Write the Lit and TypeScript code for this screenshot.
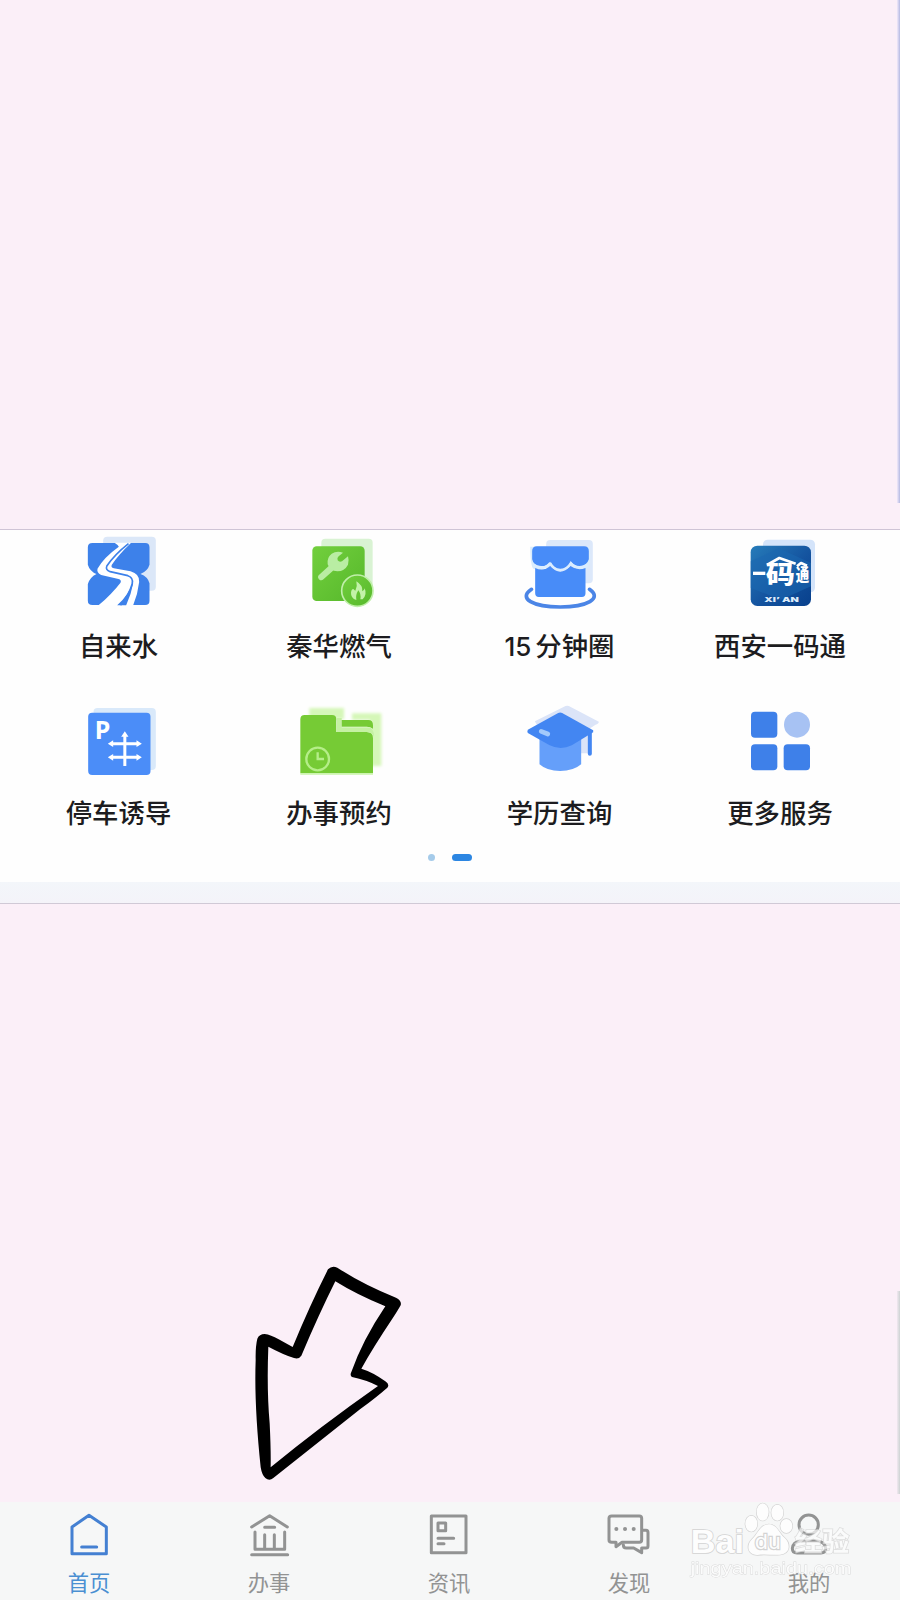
import { LitElement, html, svg, css } from "lit";
import { customElement } from "lit/decorators.js";

const ICONS = [
  {
    label: html`自来水`,
    box: "57.5 30 300 255",
    art: svg`
      <rect x="160" y="50" width="158" height="162" rx="12" fill="#dbe7f8"/>
      <path d="M128 69H286Q299 69 299 82V134Q294 152 272 162Q294 170 299 190V242Q299 255 286 255H128Q114 255 114 242V192Q120 172 140 162Q120 154 114 134V82Q114 69 128 69Z" fill="#3d81ea"/>
      <path d="M194 68H244Q206 104 186 134Q182 142 192 145L242 154Q270 162 268 186Q264 222 250 256H146Q186 222 212 188Q216 180 206 177L154 165Q140 158 143 146Q162 112 207 80Q204 74 194 68Z" fill="#fff"/>
      <path d="M236 71Q194 104 171 138Q166 150 181 155L234 167Q252 173 247 192Q238 224 212 256" fill="none" stroke="#3d81ea" stroke-width="5"/>
      <path d="M247 190Q238 224 202 256H229Q244 224 250 190Z" fill="#3d81ea"/>`,
  },
  {
    label: html`秦华燃气`,
    box: "57 30 300 255",
    art: svg`
      <rect x="154" y="56" width="154" height="164" rx="12" fill="#d9f3d3"/>
      <rect x="127" y="79" width="157" height="164" rx="13" fill="url(#leaf)"/>
      <path d="M154 171L186 142" stroke="#b9eda3" stroke-width="19" stroke-linecap="round"/>
      <path d="M219 98Q200 92 185 101Q170 113 173 133Q180 153 202 154Q224 153 234 134Q238 122 234 109L216 124Q208 128 203 121Q200 114 206 109Z" fill="#b9eda3"/>
      <circle cx="262" cy="212" r="47" fill="url(#leaf)" stroke="#c0efaa" stroke-width="5"/>
      <path d="M259 184Q279 196 277 214Q284 210 284 205Q292 224 278 238H271Q274 222 265 211Q256 225 259 240Q242 234 243 218Q244 207 250 207Q253 211 256 212Q263 198 259 184Z" fill="#c3f2a8"/>`,
  },
  {
    label: html`<span class="digits">15</span>分钟圈`,
    box: "59.5 30 300 255",
    art: svg`
      <rect x="168" y="60" width="140" height="130" rx="12" fill="#dce8fa"/>
      <path d="M120 80Q121 140 130 146Q154 156 180 134Q210 166 241 134Q266 154 290 146Q302 136 300 100V80Z" fill="#d9ecfc"/>
      <path d="M135 144Q160 156 180 138Q210 172 241 138Q262 154 286 144V220Q286 231 275 231H146Q135 231 135 220Z" fill="#488cf8"/>
      <path d="M140 79H282Q296 79 296 93V118Q290 138 268 138Q252 137 242 125Q230 147 210 147Q190 146 180 125Q170 140 153 138Q130 138 126 118V93Q126 79 140 79Z" fill="#488cf8"/>
      <path d="M180 129Q192 150 210 150Q230 150 242 129Q254 144 270 142Q284 142 292 134M180 129Q168 144 152 142Q138 142 130 134" fill="none" stroke="#dbedff" stroke-width="7"/>
      <path d="M124 208C82 236 130 261 210 261S338 236 298 208" fill="none" stroke="#4b85e6" stroke-width="11" stroke-linecap="round"/>`,
  },
  {
    label: html`西安一码通`,
    box: "91 31 300 255",
    art: svg`
      <rect x="190" y="60" width="156" height="158" rx="14" fill="#d4e4fa"/>
      <rect x="153" y="78" width="181" height="181" rx="20" fill="url(#night)"/>
      <path d="M153 125L238 86L334 130V200L244 240L153 205Z" fill="#1b67b0" opacity=".55"/>
      <path d="M160 161H197" stroke="#fff" stroke-width="10"/>
      <path d="M202 136L239 115L288 132M292 140L304 130L322 138" fill="none" stroke="#fff" stroke-width="8" stroke-linejoin="round"/>
      <text class="code" transform="translate(198 190) scale(1.22 1)">码</text>
      <text class="code" transform="translate(288 185) scale(.56 .72)">通</text>
      <text class="xian" x="194" y="247" textLength="104" lengthAdjust="spacingAndGlyphs">XI’ AN</text>`,
  },
  {
    label: html`停车诱导`,
    box: "57.5 30 300 255",
    art: svg`
      <rect x="131" y="54" width="187" height="186" rx="12" fill="#d9e9fa"/>
      <rect x="115" y="68" width="187" height="187" rx="12" fill="#4b8df8"/>
      <text class="parking" x="135" y="147">P</text>
      <path d="M225 228V136M184 161H266M184 202H266" fill="none" stroke="#fff" stroke-width="9"/>
      <path d="M225 124L236 140H214ZM174 161L190 151V171ZM276 161L260 151V171ZM174 202L190 192V212ZM276 202L260 192V212Z" fill="#fff"/>`,
  },
  {
    label: html`办事预约`,
    box: "717 30 300 255",
    art: svg`
      <g filter="url(#soft)">
        <path d="M778 54H882V88H778ZM906 70H994V228H960V90H906Z" fill="#d5f7b8"/>
      </g>
      <path d="M764 75H846Q859 75 859 88V126H950Q969 126 969 145V250H751V88Q751 75 764 75Z" fill="#76cb35"/>
      <path d="M861 84H875V112H955Q972 114 972 140Q966 126 950 126H859Z" fill="#c5f1a3"/>
      <path d="M875 90H955Q969 90 969 106V116Q962 110 950 110H875Z" fill="#76cb35"/>
      <path d="M751 252H969" stroke="#c9f4a9" stroke-width="5"/>
      <circle cx="803" cy="207" r="34" fill="none" stroke="#b5ee89" stroke-width="7"/>
      <path d="M803 187V207H822" fill="none" stroke="#b5ee89" stroke-width="7"/>`,
  },
  {
    label: html`学历查询`,
    box: "59.5 30 300 255",
    art: svg`
      <path d="M134 94L226 48Q231 46 236 48L326 95Q326 101 316 104L300 115V190H272V130L140 104Z" fill="#dbe4f8"/>
      <path d="M148 130H273V223Q250 243 210 243Q170 243 148 223Z" fill="#659ffa"/>
      <path d="M113 119L204 69Q210 66 216 69L309 121V127L245 166Q210 182 177 165L113 129Q110 124 113 119Z" fill="#4386f2"/>
      <path d="M299 125V191" stroke="#4386f2" stroke-width="12" stroke-linecap="round"/>
      <path d="M153 124L173 132" stroke="#a3cafb" stroke-width="14" stroke-linecap="round"/>`,
  },
  {
    label: html`更多服务`,
    box: "721 31 300 255",
    art: svg`
      <g fill="#3e80e9">
        <rect x="784" y="66" width="79" height="78" rx="12"/>
        <rect x="784" y="164" width="79" height="78" rx="12"/>
        <rect x="882" y="164" width="79" height="78" rx="12"/>
      </g>
      <circle cx="922" cy="105" r="39" fill="#a7c2f3"/>`,
  },
];

const TABS = [
  {
    label: "首页",
    box: "196 90 150 150",
    art: svg`<path d="M268 106L320 141V221H217V141ZM246 201H291"/>`,
  },
  {
    label: "办事",
    box: "736 90 150 150",
    art: svg`<path d="M756 141L810 107L863 141M795 142H825M766 156V208H855V156M795 164V206M824 164V206M756 224H864"/>`,
  },
  {
    label: "资讯",
    box: "1276 90 150 150",
    art: svg`<path d="M1295 108H1399V218H1295ZM1315 129H1338V152H1315ZM1315 175H1362M1315 191H1333"/>`,
  },
  {
    label: "发现",
    box: "466 90 150 150",
    art: svg`
      <path d="M486 108H569Q576 108 576 115V180Q576 187 569 187H517L499 200V187H486Q478 187 478 180V115Q478 108 486 108Z"/>
      <path d="M580 151H589Q595 151 595 158V197Q595 204 589 204H576V218L552 204H530Q521 204 521 194"/>
      <path class="dots" d="M500 147h.1M526 147h.1M552 147h.1"/>`,
  },
  {
    label: "我的",
    box: "346 90 150 150",
    art: svg`<circle cx="417" cy="134" r="29"/><path d="M392 183H442Q466 185 468 205Q468 219 454 219H382Q368 219 368 205Q370 186 392 183Z"/>`,
  },
];

@customElement("app-root")
export class AppRoot extends LitElement {
  static styles = css`
    :host {
      display: block;
      font-family: Inter, "Noto Sans CJK SC", sans-serif;
    }
    .page {
      position: relative;
      display: flex;
      flex-direction: column;
      height: 1600px;
      overflow: hidden;
      background: #fbeff8;
    }
    .blank {
      box-sizing: border-box;
      display: flex;
      justify-content: flex-end;
    }
    .top {
      height: 530px;
      border-bottom: 1px solid #cfc4d6;
    }
    .bottom {
      flex: 1;
      align-items: flex-end;
      padding-bottom: 8px;
    }
    .edge {
      width: 3px;
    }
    .top .edge {
      height: 503px;
      background: linear-gradient(90deg, #f1e9fa, #b4b9e2);
    }
    .bottom .edge {
      height: 203px;
      background: linear-gradient(90deg, #f1e8f0, #cdd3d3);
    }
    .services {
      box-sizing: border-box;
      height: 352px;
      background: #fefefe;
    }
    .grid {
      display: grid;
      grid-template-columns: repeat(4, 220.5px);
      grid-template-rows: 170px 154px;
      padding-left: 8.25px;
    }
    .service {
      display: flex;
      flex-direction: column;
      align-items: center;
    }
    .service svg {
      width: 100px;
      height: 85px;
    }
    .service .label {
      margin-top: 11px;
      font-size: 26.4px;
      line-height: 40px;
      font-weight: 500;
      color: #1c1c20;
      white-space: nowrap;
    }
    .service.lower .label {
      margin-top: 8px;
    }
    .digits {
      margin-right: 4px;
      font-size: 26px;
      font-weight: 500;
    }
    .pager {
      display: flex;
      align-items: center;
      gap: 17px;
      padding-left: 428px;
    }
    .dot {
      width: 7px;
      height: 7px;
      border-radius: 4px;
      background: #a5cbea;
    }
    .dot.on {
      width: 20px;
      background: #2c86e2;
    }
    .band {
      box-sizing: border-box;
      height: 22px;
      background: linear-gradient(#f3f6fa, #f4f3f9);
      border-bottom: 1px solid #d0c9d6;
    }
    .tabs {
      display: grid;
      grid-template-columns: repeat(5, 1fr);
      height: 98px;
      background: #f6f7f7;
    }
    .tab {
      display: flex;
      flex-direction: column;
      align-items: center;
      padding-top: 8px;
      color: #929393;
    }
    .tab.on {
      color: #4480d2;
    }
    .tab svg {
      width: 50px;
      height: 50px;
      fill: none;
      stroke: currentColor;
      stroke-width: 9;
      stroke-linecap: round;
      stroke-linejoin: round;
    }
    .tab .dots {
      stroke-width: 12;
    }
    .tab .label {
      margin: 8px 2px 0 0;
      font-size: 21.3px;
      line-height: 30px;
    }
    .tab.on .label {
      color: #4a8fd2;
    }
    .code {
      font: 900 72px "Noto Sans CJK SC", sans-serif;
      fill: #fff;
    }
    .xian {
      font: 900 20px Inter, sans-serif;
      fill: #dcecfb;
    }
    .parking {
      font: 700 75px "Noto Sans", sans-serif;
      fill: #fff;
    }
    .arrow {
      position: absolute;
      left: 230px;
      top: 1250px;
      width: 200px;
      height: 250px;
    }
    .mark {
      position: absolute;
      left: 670px;
      top: 1480px;
      width: 230px;
      height: 120px;
      fill: #fdfdfd;
      stroke: #d3d3d3;
      paint-order: stroke;
    }
    .mark .name {
      font: 700 101px "Liberation Sans", sans-serif;
      stroke-width: 5;
    }
    .mark .cjk {
      font: 700 80px "Noto Sans CJK SC", sans-serif;
      stroke-width: 5;
    }
    .mark .du {
      font: 400 62px Inter, sans-serif;
      stroke-width: 7;
    }
    .mark .site {
      font: 400 51px "Liberation Sans", sans-serif;
      stroke-width: 2.5;
    }
  `;

  render() {
    return html`<div class="page">
      <div class="blank top"><div class="edge"></div></div>
      <div class="services">
        <div class="grid">
          ${ICONS.map(
            (s, i) => html`<div class="service ${i > 3 ? "lower" : ""}">
              <svg viewBox=${s.box}>
                <defs>
                  <linearGradient id="leaf" x1="0" y1="0" x2="1" y2="1">
                    <stop offset="0" stop-color="#72cf3d" />
                    <stop offset="1" stop-color="#56b82b" />
                  </linearGradient>
                  <linearGradient id="night" x1="0" y1="0" x2="1" y2="1">
                    <stop offset="0" stop-color="#267cba" />
                    <stop offset=".55" stop-color="#14539f" />
                    <stop offset="1" stop-color="#08408c" />
                  </linearGradient>
                  <filter id="soft"><feGaussianBlur stdDeviation="4" /></filter>
                </defs>
                ${s.art}
              </svg>
              <div class="label">${s.label}</div>
            </div>`
          )}
        </div>
        <div class="pager"><div class="dot"></div><div class="dot on"></div></div>
      </div>
      <div class="band"></div>
      <div class="blank bottom"><div class="edge"></div></div>
      <div class="tabs">
        ${TABS.map(
          (t, i) => html`<div class="tab ${i === 0 ? "on" : ""}">
            <svg viewBox=${t.box}>${t.art}</svg>
            <div class="label">${t.label}</div>
          </div>`
        )}
      </div>
      <svg class="arrow" viewBox="0 0 600 750">
        <path
          fill-rule="evenodd"
          d="M294 58Q306 45 322 53Q400 104 498 143Q516 152 512 166Q502 184 484 211Q430 292 394 356Q430 367 466 394Q480 403 472 413Q440 441 390 478L130 684Q118 694 106 684Q96 676 92 652Q72 460 77 330Q76 290 82 266Q88 252 104 252Q122 254 146 268L188 291Q240 165 294 58ZM316 94Q268 190 214 317Q206 329 192 324Q160 314 115 290Q110 420 119 520Q123 600 122 652Q270 530 444 408Q410 390 366 381Q359 376 364 366Q398 270 466 169Q380 134 316 94Z"
        />
      </svg>
      <svg class="mark" viewBox="0 0 690 360">
        <text class="name" x="62" y="219" textLength="160" lengthAdjust="spacingAndGlyphs">Bai</text>
        <g stroke-width="4">
          <ellipse cx="244" cy="131" rx="18" ry="24" />
          <ellipse cx="278" cy="96" rx="18" ry="26" />
          <ellipse cx="322" cy="98" rx="18" ry="24" />
          <ellipse cx="349" cy="138" rx="18" ry="21" />
          <path d="M296 133C322 133 326 160 344 174C362 190 362 220 330 224C306 226 286 222 262 225C232 224 228 196 246 178C264 162 270 134 296 133Z" />
        </g>
        <text class="du" x="254" y="208" textLength="78" lengthAdjust="spacingAndGlyphs">du</text>
        <g opacity=".7">
          <text class="cjk" x="374" y="214" textLength="164" lengthAdjust="spacingAndGlyphs">经验</text>
        </g>
        <g opacity=".85">
          <text class="site" x="62" y="283" textLength="482" lengthAdjust="spacingAndGlyphs">jingyan.baidu.com</text>
        </g>
      </svg>
    </div>`;
  }
}
